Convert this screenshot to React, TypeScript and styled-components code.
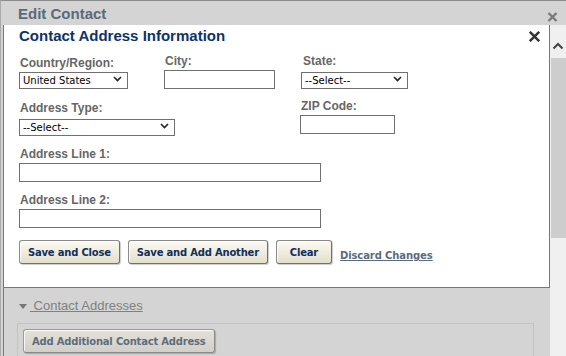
import React from "react";
import styled, { createGlobalStyle } from "styled-components";

const GlobalStyle = createGlobalStyle`
  html, body {
    margin: 0;
    padding: 0;
    background: #d4d4d4;
  }
  body {
    font-family: "Liberation Sans", Arial, sans-serif;
  }
`;

const Dialog = styled.div`
  width: 566px;
  height: 356px;
  box-sizing: border-box;
  border-top: 1px solid #8c8c8c;
  border-left: 1px solid #aaaaaa;
  background: #d4d4d4;
  display: flex;
  flex-direction: column;
  overflow: hidden;
`;

const TitleBar = styled.div`
  height: 24px;
  flex: none;
  display: flex;
  align-items: flex-start;
  justify-content: space-between;
  padding: 0 8px 0 17px;
`;

const Title = styled.div`
  font-size: 15px;
  font-weight: bold;
  line-height: 24px;
  padding-top: 1px;
  color: #5b6a79;
`;

const CloseIcon = styled.svg<{ $dark?: boolean }>`
  flex: none;
  color: ${(p) => (p.$dark ? "#333333" : "#7a7a7a")};
`;

const TitleClose = styled(CloseIcon)`
  margin-top: 11px;
`;

const Body = styled.div`
  flex: 1;
  min-height: 0;
  display: flex;
`;

const Content = styled.div`
  flex: 1;
  margin-left: 2px;
  border-left: 1px solid #777777;
  display: flex;
  flex-direction: column;
`;

const Scrollbar = styled.div`
  width: 16px;
  flex: none;
  background: #f0f0f0;
  display: flex;
  flex-direction: column;
`;

const ArrowButton = styled.div`
  height: 33px;
  box-sizing: border-box;
  padding-top: 17px;
  display: flex;
  justify-content: center;
`;

const Thumb = styled.div`
  height: 180px;
  margin-left: 1px;
  background: #cdcdcd;
`;

const Panel = styled.div`
  background: #ffffff;
  border-right: 1px solid #777777;
  border-bottom: 1px solid #777777;
  padding: 1px 9px 23px 15px;
`;

const HeadingRow = styled.div`
  display: flex;
  align-items: center;
  justify-content: space-between;
`;

const Heading = styled.h2`
  margin: 0;
  font-size: 15px;
  line-height: 20px;
  font-weight: bold;
  color: #0d3366;
`;

const FieldGrid = styled.div`
  margin-top: 8px;
  display: grid;
  grid-template-columns: 145px 136px 1fr;
  grid-template-rows: 35px 35px;
  row-gap: 10px;
`;

const Field = styled.div<{ $align?: "start" | "end"; $span?: number; $top?: number }>`
  display: flex;
  flex-direction: column;
  align-items: flex-start;
  align-self: ${(p) => (p.$align === "end" ? "end" : "start")};
  grid-column: span ${(p) => p.$span ?? 1};
  margin-top: ${(p) => p.$top ?? 0}px;
`;

const Label = styled.label<{ $snug?: boolean }>`
  display: block;
  font-size: 12px;
  line-height: 14px;
  font-weight: bold;
  color: #666666;
  padding-left: 1px;
  margin: ${(p) => (p.$snug ? "2px 0 0" : "0 0 2px")};
`;

const TextInput = styled.input<{ $w: number }>`
  width: ${(p) => p.$w}px;
  height: 19px;
  box-sizing: border-box;
  margin: 0;
  padding: 0 3px;
  border: 1px solid #707070;
  border-radius: 0;
  font-family: "DejaVu Sans", Verdana, sans-serif;
  font-size: 10px;
  outline: none;
`;

const SelectBox = styled.div<{ $w: number; $shift?: number }>`
  position: relative;
  width: ${(p) => p.$w}px;
  height: 17px;
  margin-left: ${(p) => p.$shift ?? 0}px;
`;

const Select = styled.select`
  appearance: none;
  width: 100%;
  height: 100%;
  box-sizing: border-box;
  margin: 0;
  padding: 0 18px 0 3px;
  border: 1px solid #707070;
  border-radius: 0;
  background: #ffffff;
  color: #000000;
  font-family: "DejaVu Sans", Verdana, sans-serif;
  font-size: 10px;
  line-height: 15px;
  outline: none;
`;

const Chevron = styled.svg`
  position: absolute;
  right: 6px;
  top: 6px;
  pointer-events: none;
`;

const ButtonRow = styled.div`
  margin-top: 12px;
  display: flex;
  align-items: flex-end;
  gap: 8px;
`;

const Button = styled.button<{ $muted?: boolean }>`
  height: 24px;
  min-width: 56px;
  padding: 0 8px;
  font-family: "DejaVu Sans", Verdana, sans-serif;
  font-size: 10px;
  font-weight: bold;
  letter-spacing: -0.2px;
  color: ${(p) => (p.$muted ? "#5d6d7e" : "#0f2f5c")};
  border: 1px solid ${(p) => (p.$muted ? "#9c9c9c" : "#8a8a8a")};
  border-right-color: ${(p) => (p.$muted ? "#8a8a8a" : "#6f6f6f")};
  border-bottom-color: ${(p) => (p.$muted ? "#8a8a8a" : "#6f6f6f")};
  border-radius: 3px;
  background: ${(p) =>
    p.$muted
      ? "linear-gradient(#e3e1db, #d2cfc7)"
      : "linear-gradient(#fcfaf2, #e3dfcb)"};
  box-shadow: 1px 1px 1px rgba(0, 0, 0, 0.2), inset 1px 1px 0 rgba(255, 255, 255, 0.8);
  cursor: pointer;
`;

const DiscardLink = styled.a`
  margin-bottom: 2px;
  font-family: "DejaVu Sans", Verdana, sans-serif;
  font-size: 10px;
  line-height: 12px;
  font-weight: bold;
  letter-spacing: -0.1px;
  color: #5b6b7c;
  text-decoration: underline;
  cursor: pointer;
`;

const Section = styled.div`
  padding: 10px 16px 0 13px;
`;

const SectionToggle = styled.div`
  display: flex;
  align-items: center;
  font-size: 13px;
  line-height: 16px;
  color: #808080;
`;

const Triangle = styled.svg`
  margin-left: 2px;
  margin-right: 3px;
  flex: none;
`;

const ToggleLink = styled.a`
  color: #808080;
  text-decoration: underline;
  white-space: pre;
  cursor: pointer;
`;

const AddressBox = styled.div`
  margin-top: 9px;
  border: 1px solid #c3c3c3;
  padding: 5px;
  height: 60px;
`;

const Cross = ({ size, dark }: { size: number; dark?: boolean }) => (
  <CloseIcon $dark={dark} width={size} height={size} viewBox="0 0 10 10">
    <path d="M1.5 1.5 L8.5 8.5 M8.5 1.5 L1.5 8.5" stroke="currentColor" strokeWidth="2.2" strokeLinecap="square" />
  </CloseIcon>
);

const Dropdown = ({ w, value, options, shift }: { w: number; value: string; options: string[]; shift?: number }) => (
  <SelectBox $w={w} $shift={shift}>
    <Select defaultValue={value}>
      {options.map((o) => (
        <option key={o}>{o}</option>
      ))}
    </Select>
    <Chevron width="9" height="6" viewBox="0 0 9 6">
      <path d="M1 1 L4.5 4.5 L8 1" fill="none" stroke="#222" strokeWidth="1.6" />
    </Chevron>
  </SelectBox>
);

const App = () => {
  return (
    <>
      <GlobalStyle />
      <Dialog>
        <TitleBar>
          <Title>Edit Contact</Title>
          <TitleClose width="11" height="10" viewBox="0 0 11 10">
            <path d="M1.5 1 L9.5 9 M9.5 1 L1.5 9" stroke="currentColor" strokeWidth="2.4" />
          </TitleClose>
        </TitleBar>
        <Body>
          <Content>
            <Panel>
              <HeadingRow>
                <Heading>Contact Address Information</Heading>
                <Cross size={11} dark />
              </HeadingRow>

              <FieldGrid>
                <Field>
                  <Label $snug>Country/Region:</Label>
                  <Dropdown w={109} value="United States" options={["United States", "Canada", "Mexico"]} />
                </Field>
                <Field>
                  <Label>City:</Label>
                  <TextInput $w={111} />
                </Field>
                <Field>
                  <Label style={{ paddingLeft: 3 }}>State:</Label>
                  <Dropdown w={107} value="--Select--" options={["--Select--"]} shift={1} />
                </Field>
                <Field $align="end" $span={2}>
                  <Label>Address Type:</Label>
                  <Dropdown w={156} value="--Select--" options={["--Select--", "Home", "Work"]} />
                </Field>
                <Field $align="end">
                  <Label>ZIP Code:</Label>
                  <TextInput $w={95} />
                </Field>
              </FieldGrid>

              <Field $top={13}>
                <Label>Address Line 1:</Label>
                <TextInput $w={302} />
              </Field>
              <Field $top={11}>
                <Label>Address Line 2:</Label>
                <TextInput $w={302} />
              </Field>

              <ButtonRow>
                <Button>Save and Close</Button>
                <Button>Save and Add Another</Button>
                <Button>Clear</Button>
                <DiscardLink>Discard Changes</DiscardLink>
              </ButtonRow>
            </Panel>

            <Section>
              <SectionToggle>
                <Triangle width="8" height="5" viewBox="0 0 8 5">
                  <path d="M0 0 H8 L4 5 Z" fill="#777" />
                </Triangle>
                <ToggleLink>{"\u00a0Contact Addresses"}</ToggleLink>
              </SectionToggle>
              <AddressBox>
                <Button $muted>Add Additional Contact Address</Button>
              </AddressBox>
            </Section>
          </Content>
          <Scrollbar>
            <ArrowButton>
              <svg width="12" height="8" viewBox="0 0 12 8">
                <path d="M1.5 6.5 L6 2 L10.5 6.5" fill="none" stroke="#444" strokeWidth="2" />
              </svg>
            </ArrowButton>
            <Thumb />
          </Scrollbar>
        </Body>
      </Dialog>
    </>
  );
};

export default App;
